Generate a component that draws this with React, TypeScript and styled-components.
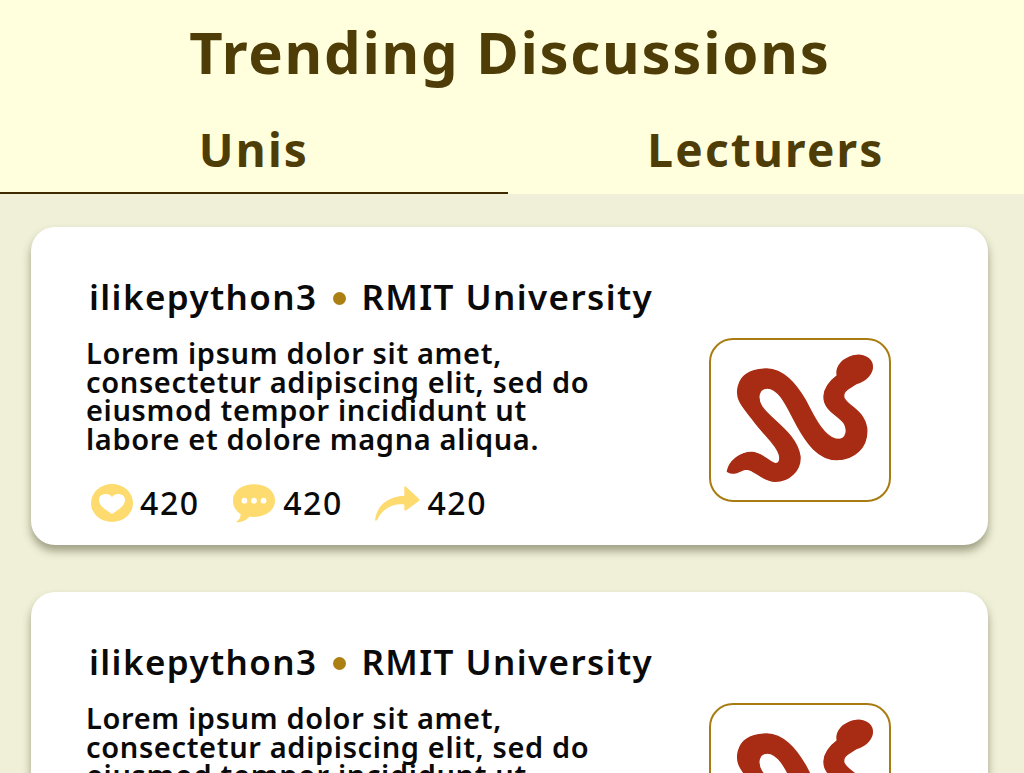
import React from "react";
import styled, { createGlobalStyle } from "styled-components";

const Global = createGlobalStyle`
  html, body { margin: 0; padding: 0; height: 100%; overflow: hidden; background: #f0f0d8; }
  * { box-sizing: border-box; }
`;

const Page = styled.div`
  width: 1024px;
  height: 773px;
  overflow: hidden;
  font-family: "Noto Sans", "Open Sans", sans-serif;
  background: #f0f0d8;
`;

const Header = styled.header`
  background: #ffffdd;
  height: 194px;
  display: flex;
  flex-direction: column;
`;

const Title = styled.h1`
  margin: 0;
  height: 106px;
  padding-right: 4px;
  font-size: 58px;
  letter-spacing: 1.75px;
  line-height: 104px;
  font-weight: 700;
  color: #4f3d08;
  text-align: center;
`;

const Tabs = styled.nav`
  flex: 1;
  display: grid;
  grid-template-columns: 508px 516px;
`;

const Tab = styled.div<{ $active?: boolean }>`
  font-size: 46px;
  letter-spacing: 2.2px;
  font-weight: 700;
  color: #4f3d08;
  text-align: center;
  line-height: 86px;
  border-bottom: 2px solid ${(p) => (p.$active ? "#3f2a00" : "transparent")};
`;

const List = styled.main`
  display: flex;
  flex-direction: column;
  gap: 47px;
  padding: 33px 36px 0 31px;
`;

const Card = styled.article`
  flex: none;
  height: 318px;
  background: #fff;
  border-radius: 24px;
  box-shadow: 0 6px 9px rgba(60, 60, 30, 0.45);
  padding: 46px 97px 0 56px;
  display: grid;
  grid-template-columns: 1fr 182px;
`;

const Content = styled.div`
  display: flex;
  flex-direction: column;
  min-width: 0;
`;

const Meta = styled.div`
  font-size: 35px;
  letter-spacing: 1.4px;
  line-height: 48px;
  font-weight: 600;
  color: #0a0a0a;
  padding-left: 2px;
  white-space: nowrap;
`;

const Dot = styled.span`
  display: inline-block;
  width: 13px;
  height: 13px;
  border-radius: 50%;
  background: #ac7f12;
  margin: 0 15px 0 16px;
  vertical-align: 5px;
`;

const Body = styled.p`
  margin: 18px 0 0 -1px;
  font-size: 29px;
  letter-spacing: 0.65px;
  line-height: 28.5px;
  font-weight: 600;
  color: #0a0a0a;
  white-space: pre-line;
`;

const Stats = styled.div`
  margin-top: 30px;
  display: flex;
  align-items: center;
  gap: 32.5px;
  padding-left: 4px;
`;

const Stat = styled.div`
  display: flex;
  align-items: center;
  gap: 7px;
  font-size: 32px;
  letter-spacing: 1.6px;
  line-height: 40px;
  font-weight: 500;
  color: #0a0a0a;
`;

const Avatar = styled.div`
  width: 182px;
  height: 164px;
  margin-top: 65px;
  border: 2px solid #a87c12;
  border-radius: 24px;
  background: #fff;
`;

const Icon = styled.svg`
  display: block;
  flex: none;
`;

const Snake = () => (
  <Icon viewBox="63 61 534 480" width="178" height="160">
    <path
      d="M112 455 C118 425 150 398 185 398 C215 398 232 425 255 432 C268 434 272 420 268 405 C258 370 215 340 185 295 C160 262 135 240 145 200 C155 160 190 148 230 148 C280 150 315 190 345 240 C370 285 395 345 435 358 C465 365 475 340 465 315 C455 290 400 275 402 230 C403 200 425 180 445 165 L500 190 C485 205 455 210 462 235 C475 262 520 270 530 325 C535 385 490 420 440 420 C385 420 350 370 320 315 C295 270 270 205 232 205 C205 205 200 235 215 260 C240 300 320 340 330 410 C333 450 300 485 255 485 C215 483 195 450 170 448 C150 450 135 470 112 455 Z"
      fill="#a82c14"
      stroke="#a82c14"
      strokeWidth="4"
      strokeLinejoin="round"
    />
    <ellipse cx="494" cy="150" rx="57" ry="43" transform="rotate(-22 494 150)" fill="#a82c14" />
  </Icon>
);

const Heart = () => (
  <Icon viewBox="0 0 42 38" width="42" height="38">
    <ellipse cx="21" cy="19" rx="21" ry="19" fill="#fddb6f" />
    <path
      d="M21 30 C15 26 8 22 8 16 C8 12 11 10 15 10 C18 10 20 11.500 21 13 C22 11.500 24 10 27 10 C31 10 34 12 34 16 C34 22 27 26 21 30 Z"
      fill="#fff"
    />
  </Icon>
);

const Bubble = () => (
  <Icon viewBox="0 0 46 40" width="44" height="39">
    <path
      d="M23 0 C36 0 45 7 45 17 C45 27 35 34 23 34 C21 34 20 34 18 33.5 C16 37 10 40 4 39.5 C8 37 9 34 9 31 C4 28 1 23 1 17 C1 7 10 0 23 0 Z"
      fill="#fddb6f"
    />
    <circle cx="13" cy="17" r="3" fill="#fff" />
    <circle cx="23" cy="17" r="3" fill="#fff" />
    <circle cx="33" cy="17" r="3" fill="#fff" />
  </Icon>
);

const Share = () => (
  <Icon viewBox="0 0 46 36" width="45" height="35">
    <path
      d="M0 35 C1 24 9 11 30 10 L30 1 C30 0 31 0 32 1 L45 13 C46 14 46 15 45 15.500 L32 25 C31 26 30 25 30 24 L30 19 C17 18 7 24 2 35 C1 36 0 36 0 35 Z"
      fill="#fddb6f"
    />
  </Icon>
);

const text = "Lorem ipsum dolor sit amet,\nconsectetur adipiscing elit, sed do\neiusmod tempor incididunt ut\nlabore et dolore magna aliqua.";

const Post = () => (
  <Card>
    <Content>
      <Meta>
        ilikepython3<Dot />RMIT University
      </Meta>
      <Body>{text}</Body>
      <Stats>
        <Stat><Heart />420</Stat>
        <Stat><Bubble />420</Stat>
        <Stat><Share />420</Stat>
      </Stats>
    </Content>
    <Avatar><Snake /></Avatar>
  </Card>
);

export default function App() {
  return (
    <Page>
      <Global />
      <Header>
        <Title>Trending Discussions</Title>
        <Tabs>
          <Tab $active>Unis</Tab>
          <Tab>Lecturers</Tab>
        </Tabs>
      </Header>
      <List>
        <Post />
        <Post />
      </List>
    </Page>
  );
}
